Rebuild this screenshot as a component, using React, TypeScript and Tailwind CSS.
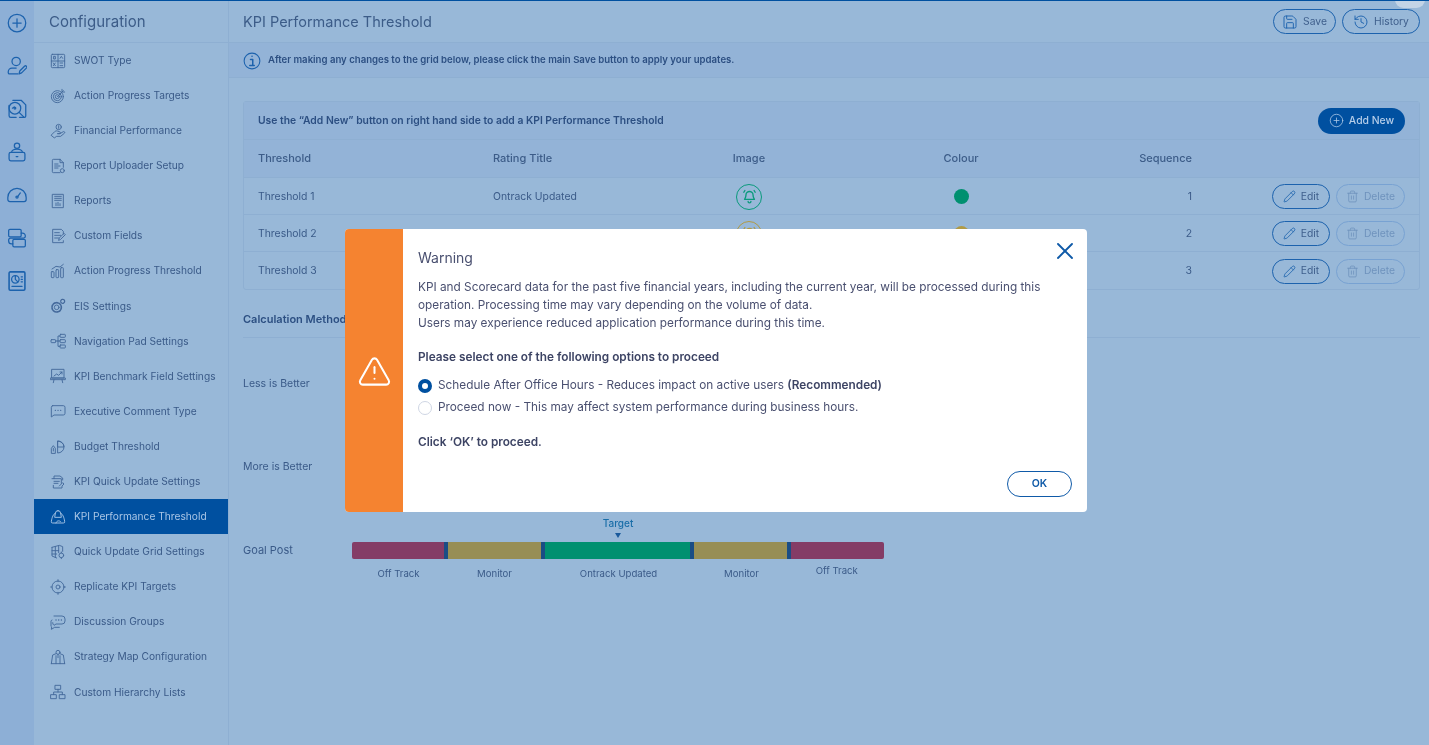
import { ReactNode } from 'react';
import { Save, History, Pencil, Trash2, CirclePlus, X, TriangleAlert } from 'lucide-react';

// thin line icons, all on a 24 box
function Ico({ children, className, sw = 1.4 }: { children: ReactNode; className?: string; sw?: number }) {
  return (
    <svg viewBox="0 0 24 24" fill="none" stroke="currentColor" strokeWidth={sw} strokeLinecap="round" strokeLinejoin="round" className={className}>
      {children}
    </svg>
  );
}

const railIcons: ReactNode[] = [
  <><circle cx="12" cy="12" r="10.5" /><path d="M12 7v10M7 12h10" /></>,
  <><circle cx="11" cy="6.5" r="5" /><path d="M11 14.5H6a4.5 4.5 0 0 0-4.5 4.5v1A1.5 1.5 0 0 0 3 21.500h10" /><path d="M14.500 21.500l.8-3.500 6-6a1.600 1.600 0 0 1 2.200 2.200l-6 6z" /></>,
  <><path d="M7 1.500h10l5.500 5.500v13.500a1.500 1.500 0 0 1-1.500 1.500H15" /><path d="M2.500 7.500V20a2 2 0 0 0 2 2H11" /><circle cx="9.500" cy="11" r="7" /><path d="M6.500 11l2.200-1.500M14.500 16l5.500 5.500" /><circle cx="9.500" cy="11" r="1" /></>,
  <><circle cx="12" cy="4.500" r="3.200" /><path d="M5.500 12.500a6.500 4 0 0 1 13 0" /><rect x="2.500" y="12.500" width="19" height="10" rx="2" /><path d="M11 17.500h2" /></>,
  <><path d="M3.500 20A2.500 2.500 0 0 1 1 17.500V15a11 11 0 0 1 22 0v2.500a2.500 2.500 0 0 1-2.500 2.500z" /><circle cx="12" cy="14.500" r="1.300" /><path d="M13 13.500l3-4" /></>,
  <><rect x="2" y="1.500" width="15" height="9" rx="1.500" /><rect x="7" y="13.500" width="15" height="9" rx="1.500" /><path d="M17 6h1.500a3.500 3.500 0 0 1 3.500 3.500v.5a2 2 0 0 1-2 2H4.500A2.500 2.500 0 0 0 2 14.500v1A3.500 3.500 0 0 0 5.500 19H7" /></>,
  <><rect x="2.500" y="1" width="19" height="22" rx="1.500" strokeWidth="1.900" /><circle cx="10" cy="10" r="4.500" /><path d="M10 5.500V10l3 3M17 7h1.500M17 10h1.500M17 13h1.500M6 18.500h12" /></>,
];

const sideIcons: Record<string, ReactNode> = {
  swot: <><rect x="2" y="2" width="20" height="20" rx="1.500" /><path d="M12 2v20M2 12h20M6 5h2v4H6zM15 8l2-3 2 3M5 15l3 4M8 15l-3 4M15 15h4M15 19h4" /></>,
  target: <><circle cx="11" cy="13" r="9" /><circle cx="11" cy="13" r="6" /><circle cx="11" cy="13" r="3" /><path d="M11 13L20 4M18 2v4h4" /></>,
  finance: <><circle cx="13" cy="6" r="4" /><path d="M13 4v4M2 18l5-5c1-1 3-1.500 4-1l3 1a1.500 1.500 0 0 1 0 3h-3l4 0 5-3a1.500 1.500 0 0 1 2 2l-6 5H10l-3 2z" /></>,
  upload: <><path d="M15 2H5a1.500 1.500 0 0 0-1.500 1.500v17A1.500 1.500 0 0 0 5 22h10M15 2l5 5v7M15 2v5h5M7 9h5M7 12h8M7 15h5" /><circle cx="18.500" cy="19" r="3" /></>,
  reports: <><rect x="4" y="2" width="16" height="20" /><path d="M7 5h10M7 8h10M7 11h10M9 19v-4M12 19v-5M15 19v-3" /></>,
  fields: <><path d="M20 9V5l-3-3H4v20h16v-3M7 7h7M7 11h9M7 15h6" /><path d="M13 18l1-3 7-7 2 2-7 7z" /></>,
  progress: <><rect x="2" y="13" width="4" height="9" rx="1" /><rect x="9" y="10" width="4" height="12" rx="1" /><rect x="16" y="7" width="4" height="15" rx="1" /><path d="M3 9l6-4 6 1 5-4" /></>,
  eis: <><circle cx="10" cy="14" r="7" strokeDasharray="3 1.500" strokeWidth="2.400" /><circle cx="10" cy="14" r="3.500" /><circle cx="19" cy="5" r="3" strokeDasharray="2 1" strokeWidth="1.800" /></>,
  nav: <><rect x="1.500" y="10" width="7" height="4.500" rx="1" /><rect x="15" y="2" width="8" height="4.500" rx="1" /><rect x="15" y="10" width="8" height="4.500" rx="1" /><rect x="15" y="18" width="8" height="4.500" rx="1" /><path d="M8.500 12H15M12 12V4.500h3M12 12v8h3" /></>,
  bench: <><rect x="3" y="2" width="18" height="13" /><path d="M1 15h22v2.500H1zM6 17.500L5 22M18 17.500l1 4.500M6 12l4-3 3 2 5-5M15 6h3v3" /></>,
  comment: <><path d="M4 4h16a2.500 2.500 0 0 1 2.500 2.500v9A2.500 2.500 0 0 1 20 18H6l-4 3V6.500A2.500 2.500 0 0 1 4 4z" /><path d="M8 11h.1M12 11h.1M16 11h.1" strokeWidth="2" /></>,
  budget: <><path d="M12 3a9 9 0 1 1 0 18zM12 3a9 9 0 0 1 9 9h-9z" /><path d="M2 21v-7l3-4 3 4v7zM5 14v4" /></>,
  quick: <><path d="M6 7V3h9l4 3v3M3 7h14v7M6 11h8M6 14h6M5 17v4h13v-3l3-3-2-2-5 5" /></>,
  perf: <><path d="M12 2.500a4 4 0 0 1 4 4c3 1 5 6 6 12a2 2 0 0 1-2 2.500H4a2 2 0 0 1-2-2.500c1-6 3-11 6-12a4 4 0 0 1 4-4z" /><path d="M8 6.500l-1 6h10l-1-6M9 21c1-4 5-4 7-2" /></>,
  grid: <><path d="M3 5l11-3 5 2v7M3 5v13l7 3M3 10h10M3 15h7M8 4v16M13 3v10" /><circle cx="17" cy="17" r="3.500" /><path d="M17 12v1.500M17 20.500V22" /></>,
  replicate: <><circle cx="12" cy="12" r="9" /><circle cx="12" cy="12" r="3" /><path d="M12 1v3M12 20v3M1 12h2M21 12h2" /></>,
  discuss: <><path d="M6 3h12a4.500 4.500 0 0 1 4.500 4.500v3A4.500 4.500 0 0 1 18 15H9l-3 2a4.500 4.500 0 0 1-2-4" /><path d="M3 9a2 2 0 0 0-1.500 2v7a2 2 0 0 0 1 1.500L2 23l5-3h7" /><path d="M9 9h.1M13 9h.1M17 9h.1" strokeWidth="2" /></>,
  map: <><path d="M2 22l2-13 5-2M22 22l-2-13-5-2M2 22h20M9 22V10M15 22V10" /><circle cx="12" cy="5" r="3" /><path d="M12 8v5" /></>,
  hier: <><rect x="8" y="2" width="8" height="6" /><rect x="1.500" y="16" width="8" height="6" /><rect x="14.500" y="16" width="8" height="6" /><path d="M12 8v4M5.500 16v-4h13v4" /></>,
};

const menu: [string, string][] = [
  ['SWOT Type', 'swot'],
  ['Action Progress Targets', 'target'],
  ['Financial Performance', 'finance'],
  ['Report Uploader Setup', 'upload'],
  ['Reports', 'reports'],
  ['Custom Fields', 'fields'],
  ['Action Progress Threshold', 'progress'],
  ['EIS Settings', 'eis'],
  ['Navigation Pad Settings', 'nav'],
  ['KPI Benchmark Field Settings', 'bench'],
  ['Executive Comment Type', 'comment'],
  ['Budget Threshold', 'budget'],
  ['KPI Quick Update Settings', 'quick'],
  ['KPI Performance Threshold', 'perf'],
  ['Quick Update Grid Settings', 'grid'],
  ['Replicate KPI Targets', 'replicate'],
  ['Discussion Groups', 'discuss'],
  ['Strategy Map Configuration', 'map'],
  ['Custom Hierarchy Lists', 'hier'],
];

const rows = [
  { name: 'Threshold 1', title: 'Ontrack Updated', ring: 'border-[#0a9a7c] text-[#0a9a7c]', dot: 'bg-[#009070]', seq: 1 },
  { name: 'Threshold 2', title: 'Monitor', ring: 'border-[#b09a45] text-[#b09a45]', dot: 'bg-[#b09a45]', seq: 2 },
  { name: 'Threshold 3', title: 'Off Track', ring: 'border-[#843c66] text-[#843c66]', dot: 'bg-[#843c66]', seq: 3 },
];

function OutlineBtn({ icon, label, className }: { icon: ReactNode; label: string; className?: string }) {
  return (
    <button className={`flex h-[25px] items-center justify-center gap-[5px] rounded-full border border-[#1c62ad] text-[10.3px] text-[#3f5f8c] ${className ?? ''}`}>
      {icon}
      {label}
    </button>
  );
}

export default function App() {
  return (
    <div className="relative flex h-[745px] w-[1429px] overflow-hidden border-t border-[#0050a0] bg-[#98b8d8] font-['Inter',sans-serif] text-[#3a5a88] blur-[0.35px]">
      <div className="absolute right-[4px] top-[-10px] h-[17px] w-[30px] rounded-full bg-[#c3d4e6]" />

      {/* icon rail */}
      <div className="flex w-[34px] shrink-0 flex-col items-center bg-[#8dafd6] text-[#1c62ad]">
        {railIcons.map((ic, i) => (
          <div key={i} className="flex h-[43px] items-center justify-center">
            <Ico className="h-[20px] w-[20px]" sw={1.5}>{ic}</Ico>
          </div>
        ))}
      </div>

      {/* config menu */}
      <div className="w-[195px] shrink-0 border-r border-[#8eafd2]">
        <div className="flex h-[42px] items-center border-b border-[#8eafd2] pl-[15px] pt-[2px] text-[15px] text-[#3c5c88]">Configuration</div>
        {menu.map(([label, key]) => {
          const active = label === 'KPI Performance Threshold';
          return (
            <div key={label} className={`flex h-[35.1px] items-center gap-[8px] pl-[16px] text-[10.2px] ${active ? 'bg-[#0050a0] text-[#a9c6e6]' : 'text-[#3a5a88]'}`}>
              <Ico className={`h-[16px] w-[16px] shrink-0 ${active ? 'text-[#a9c6e6]' : 'text-[#44699b]'}`}>{sideIcons[key]}</Ico>
              {label}
            </div>
          );
        })}
      </div>

      {/* main */}
      <div className="flex min-w-0 flex-1 flex-col">
        <div className="flex h-[42px] shrink-0 items-center justify-between border-b border-[#8eafd2] pl-[14px] pr-[9px]">
          <div className="text-[14.5px] text-[#3c5c88]">KPI Performance Threshold</div>
          <div className="flex gap-[6px]">
            <OutlineBtn className="w-[63px]" label="Save" icon={<Save className="h-[16px] w-[16px] text-[#1c62ad]" strokeWidth={1.4} />} />
            <OutlineBtn className="w-[78px]" label="History" icon={<History className="h-[16px] w-[16px] text-[#1c62ad]" strokeWidth={1.4} />} />
          </div>
        </div>

        <div className="flex h-[35px] shrink-0 items-center gap-[7px] border-b border-[#8eafd2] bg-[#93b3d7] pl-[14px] pt-[1px] text-[9.6px] font-semibold text-[#2c4f82]">
          <Ico className="h-[18px] w-[18px] text-[#1c62ad]" sw={1.4}>
            <circle cx="12" cy="12" r="10.5" />
            <path d="M12 5.5h.1M10 10h3v6.500M9 18h6" strokeWidth="2" />
          </Ico>
          After making any changes to the grid below, please click the main Save button to apply your updates.
        </div>

        <div className="flex flex-col pl-[14px] pr-[9px] pt-[23px]">
          <div className="rounded-[3px] border border-[#8eafd2]">
            <div className="flex h-[38px] items-center justify-between border-b border-[#8eafd2] bg-[#93b3d7] pl-[14px] pr-[14px] text-[10.35px] font-semibold text-[#2c4f82]">
              Use the “Add New” button on right hand side to add a KPI Performance Threshold
              <button className="flex h-[26px] w-[87px] items-center justify-center gap-[5px] rounded-full bg-[#0050a0] text-[10.4px] font-medium text-[#b4cde9]">
                <CirclePlus className="h-[15px] w-[15px]" strokeWidth={1.2} />
                Add New
              </button>
            </div>

            <div className="grid h-[38px] grid-cols-[235px_190px_132px_292px_85px_1fr] items-center border-b border-[#8eafd2] bg-[#93b3d7] pl-[14px] pr-[14px] text-[11px] font-medium text-[#3c5c88]">
              <div>Threshold</div>
              <div>Rating Title</div>
              <div className="text-center">Image</div>
              <div className="text-center">Colour</div>
              <div className="text-right">Sequence</div>
              <div />
            </div>

            {rows.map((r, i) => (
              <div key={r.name} className={`grid h-[37px] grid-cols-[235px_190px_132px_292px_85px_1fr] items-center pl-[14px] pr-[14px] pt-[1px] text-[10.4px] ${i < 2 ? 'border-b border-[#8eafd2]' : ''}`}>
                <div>{r.name}</div>
                <div>{r.title}</div>
                <div className="flex justify-center">
                  <div className={`flex h-[26px] w-[26px] items-center justify-center rounded-full border-[1.5px] ${r.ring}`}>
                    <Ico className="h-[17px] w-[17px]" sw={1.9}>
                      <path d="M12 5a5 5 0 0 1 5 5c0 4 1.500 5 2 6H5c.5-1 2-2 2-6a5 5 0 0 1 5-5zM10 19a2 2 0 0 0 4 0M4 6l1.500-2.500M20 6l-1.500-2.500" />
                    </Ico>
                  </div>
                </div>
                <div className="flex justify-center">
                  <div className={`h-[15px] w-[15px] rounded-full ${r.dot}`} />
                </div>
                <div className="text-right">{r.seq}</div>
                <div className="flex justify-end gap-[6px]">
                  <OutlineBtn className="w-[58px]" label="Edit" icon={<Pencil className="h-[13px] w-[13px] text-[#1c62ad]" strokeWidth={1.5} />} />
                  <button className="flex h-[25px] w-[69px] items-center justify-center gap-[5px] rounded-full border border-[#78a2d2] text-[10.3px] text-[#6f93bd]">
                    <Trash2 className="h-[13px] w-[13px]" strokeWidth={1.5} />
                    Delete
                  </button>
                </div>
              </div>
            ))}
          </div>

          <div className="mt-[21px] border-b border-[#8eafd2] pb-[9px] text-[11px] font-semibold text-[#2c4f82]">Calculation Method</div>

          <div className="flex h-[93px] items-center text-[10.5px]">Less is Better</div>
          <div className="flex h-[73px] items-center text-[10.5px]">More is Better</div>

          <div className="flex items-start pt-[12px]">
            <div className="w-[109px] pt-[26px] text-[11px]">Goal Post</div>
            <div className="w-[532px]">
              <div className="flex flex-col items-center text-[10px] font-medium text-[#1a6ea8]">
                <div className="leading-[14px]">Target</div>
                <div className="mb-[4px] mt-[3px] h-0 w-0 border-x-[3.5px] border-t-[5px] border-x-transparent border-t-[#1a5a9c]" />
              </div>
              <div className="flex h-[17px]">
                <div className="w-[91.5px] rounded-l-[2px] bg-[#843c66]" />
                <div className="w-[4px] bg-[#1a4d85]" />
                <div className="w-[93px] bg-[#978e55]" />
                <div className="w-[4px] bg-[#1a4d85]" />
                <div className="w-[145px] bg-[#009070]" />
                <div className="w-[4px] bg-[#1a4d85]" />
                <div className="w-[93px] bg-[#978e55]" />
                <div className="w-[4px] bg-[#1a4d85]" />
                <div className="w-[93.5px] rounded-r-[2px] bg-[#843c66]" />
              </div>
              <div className="mt-[9px] flex text-[9.6px] leading-[12px]">
                <div className="w-[93px] text-center">Off Track</div>
                <div className="w-[99px] text-center">Monitor</div>
                <div className="w-[149px] text-center">Ontrack Updated</div>
                <div className="w-[97px] text-center">Monitor</div>
                <div className="mt-[-3px] w-[93.5px] text-center">Off Track</div>
              </div>
            </div>
          </div>
        </div>
      </div>

      {/* warning dialog */}
      <div className="fixed inset-0 flex items-center justify-center pb-[6px] pl-[3px]">
        <div className="flex h-[283px] w-[742px] overflow-hidden rounded-[4px] bg-white text-[#4a5070]">
          <div className="flex w-[58px] shrink-0 items-center justify-center bg-[#f58330] pt-[2px]">
            <TriangleAlert className="h-[35px] w-[35px] text-white" strokeWidth={1.4} />
          </div>
          <div className="relative flex-1 pl-[15px] pr-[15px] pt-[19px]">
            <button className="absolute right-[8px] top-[8px] text-[#0f5aa8]">
              <X className="h-[28px] w-[28px]" strokeWidth={1.6} />
            </button>
            <div className="text-[14px] leading-[20px]">Warning</div>
            <div className="mt-[10px] text-[11.8px] leading-[18px]">
              <p>KPI and Scorecard data for the past five financial years, including the current year, will be processed during this</p>
              <p>operation. Processing time may vary depending on the volume of data.</p>
              <p>Users may experience reduced application performance during this time.</p>
            </div>
            <div className="mt-[16px] text-[11.8px] font-semibold leading-[18px] text-[#3d4464]">Please select one of the following options to proceed</div>
            <div className="mt-[11px] flex h-[18px] items-center gap-[6px] text-[11.8px]">
              <span className="h-[14px] w-[14px] rounded-full border-[4px] border-[#0050a0] bg-white" />
              <span>Schedule After Office Hours - Reduces impact on active users <b className="font-semibold text-[#3d4464]">(Recommended)</b></span>
            </div>
            <div className="mt-[4px] flex h-[18px] items-center gap-[6px] text-[11.8px]">
              <span className="h-[14px] w-[14px] rounded-full border border-[#cfd6e4] bg-white" />
              <span>Proceed now - This may affect system performance during business hours.</span>
            </div>
            <div className="mt-[16px] text-[11.8px] font-semibold leading-[18px] text-[#3d4464]">Click ‘OK’ to proceed.</div>
            <div className="mt-[20px] flex justify-end">
              <button className="h-[26px] w-[65px] rounded-full border border-[#0f5aa8] text-[10.5px] font-semibold text-[#0f5aa8]">OK</button>
            </div>
          </div>
        </div>
      </div>
    </div>
  );
}
